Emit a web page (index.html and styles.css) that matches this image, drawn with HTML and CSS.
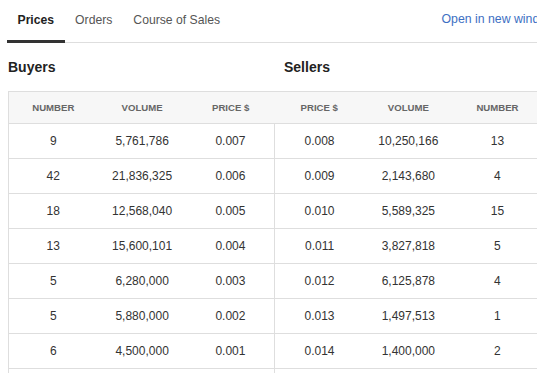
FILE: index.html
```html
<!DOCTYPE html>
<html lang="en">
<head>
<meta charset="utf-8">
<title>Prices</title>
<link rel="stylesheet" href="styles.css">
</head>
<body>
<div class="page">
  <nav class="tabs">
    <div class="tab-list">
      <a class="tab active" href="#">Prices</a>
      <a class="tab" href="#">Orders</a>
      <a class="tab" href="#">Course of Sales</a>
    </div>
    <a class="new-window" href="#">Open in new window</a>
  </nav>
  <div class="sides">
    <h2 class="side-title">Buyers</h2>
    <h2 class="side-title sellers">Sellers</h2>
  </div>
  <table class="depth">
    <colgroup>
      <col class="c89"><col class="c89"><col class="c88">
      <col class="c89"><col class="c89"><col class="c89">
    </colgroup>
    <thead>
      <tr>
        <th>Number</th><th>Volume</th><th>Price $</th>
        <th>Price $</th><th>Volume</th><th>Number</th>
      </tr>
    </thead>
    <tbody>
      <tr><td>9</td><td>5,761,786</td><td class="mid">0.007</td><td>0.008</td><td>10,250,166</td><td>13</td></tr>
      <tr><td>42</td><td>21,836,325</td><td class="mid">0.006</td><td>0.009</td><td>2,143,680</td><td>4</td></tr>
      <tr><td>18</td><td>12,568,040</td><td class="mid">0.005</td><td>0.010</td><td>5,589,325</td><td>15</td></tr>
      <tr><td>13</td><td>15,600,101</td><td class="mid">0.004</td><td>0.011</td><td>3,827,818</td><td>5</td></tr>
      <tr><td>5</td><td>6,280,000</td><td class="mid">0.003</td><td>0.012</td><td>6,125,878</td><td>4</td></tr>
      <tr><td>5</td><td>5,880,000</td><td class="mid">0.002</td><td>0.013</td><td>1,497,513</td><td>1</td></tr>
      <tr><td>6</td><td>4,500,000</td><td class="mid">0.001</td><td>0.014</td><td>1,400,000</td><td>2</td></tr>
      <tr><td></td><td></td><td class="mid"></td><td></td><td></td><td></td></tr>
    </tbody>
  </table>
</div>
</body>
</html>
```
FILE: styles.css
```css
html, body {
  margin: 0;
  padding: 0;
  overflow: hidden;
  background: #fff;
}
body {
  font-family: "Liberation Sans", Arial, sans-serif;
  color: #333;
}
.page {
  width: 600px;
  padding-left: 7px;
}
.tabs {
  display: flex;
  justify-content: space-between;
  align-items: stretch;
  height: 42px;
  border-bottom: 1px solid #dedede;
}
.tab-list {
  display: flex;
}
.tab {
  display: flex;
  align-items: center;
  padding: 0 10.5px 1px;
  margin-bottom: -1px;
  border-bottom: 3px solid transparent;
  font-size: 12.2px;
  color: #555;
  text-decoration: none;
}
.tab.active {
  color: #222;
  font-weight: bold;
  border-bottom-color: #333;
}
.new-window {
  display: flex;
  align-items: center;
  padding-bottom: 4px;
  margin-right: 52px;
  font-size: 12.3px;
  color: #3d6fc3;
  text-decoration: none;
}
.sides {
  display: flex;
  padding-left: 1px;
  margin: 16px 0;
}
.side-title {
  width: 266px;
  margin: 0;
  font-size: 14px;
  line-height: 16px;
  font-weight: bold;
  color: #222;
}
.side-title.sellers {
  padding-left: 10px;
}
.depth {
  margin-left: 1px;
  border-collapse: collapse;
  table-layout: fixed;
  width: 534px;
  border-left: 1px solid #dedede;
  border-top: 1px solid #dedede;
}
.c89 { width: 89px; }
.c88 { width: 88px; }
.depth th {
  height: 31px;
  padding: 0;
  background: #f7f7f7;
  border-bottom: 1px solid #dedede;
  font-size: 9.6px;
  font-weight: bold;
  text-transform: uppercase;
  color: #666;
  text-align: center;
  vertical-align: middle;
}
.depth td {
  height: 34px;
  padding: 0;
  border-bottom: 1px solid #dedede;
  font-size: 12px;
  color: #333;
  text-align: center;
  vertical-align: middle;
}
.depth td.mid {
  border-right: 1px solid #dedede;
}
```
